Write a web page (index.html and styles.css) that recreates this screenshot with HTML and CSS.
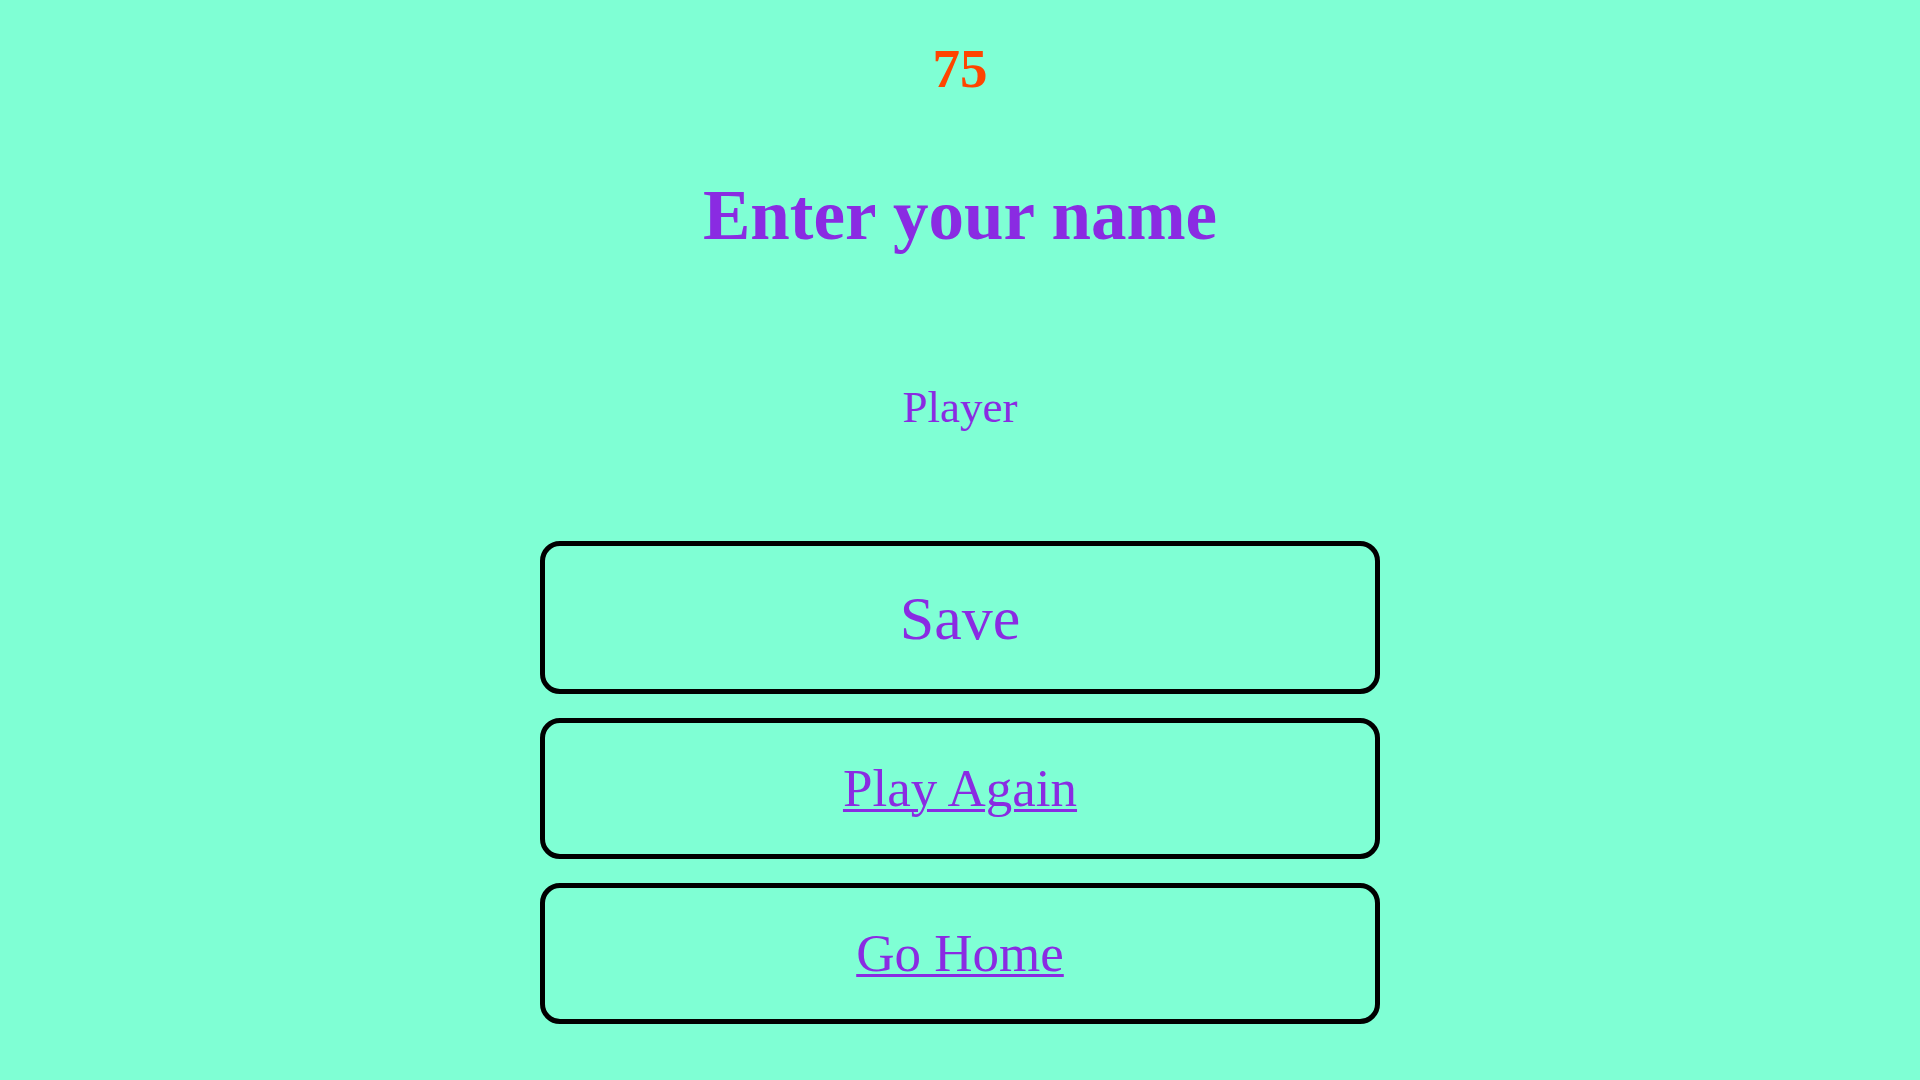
FILE: index.html
```html
<!DOCTYPE html>
<html lang="en">
<head>
<meta charset="utf-8">
<title>Game Over</title>
<link rel="stylesheet" href="styles.css">
</head>
<body>
<main class="screen">
  <div class="score">75</div>
  <h1 class="title">Enter your name</h1>
  <div class="player">Player</div>
  <div class="actions">
    <button class="btn btn-save" type="button">Save</button>
    <div class="btn btn-link-box"><a class="btn-link" href="#">Play Again</a></div>
    <div class="btn btn-link-box"><a class="btn-link" href="#">Go Home</a></div>
  </div>
</main>
</body>
</html>
```

FILE: styles.css
```css
html, body {
  margin: 0;
  padding: 0;
  background: #7fffd4;
}

body {
  font-family: "Liberation Serif", "Times New Roman", serif;
  color: #8a2be2;
  height: 1080px;
  overflow: hidden;
}

.screen {
  display: flex;
  flex-direction: column;
  align-items: center;
  padding-top: 41px;
}

.score {
  font-size: 55px;
  font-weight: bold;
  line-height: 1;
  color: #ff4500;
}

.title {
  margin: 84px 0 0;
  font-size: 71px;
  font-weight: bold;
  line-height: 1;
  color: #8a2be2;
}

.player {
  margin-top: 134px;
  font-size: 45px;
  line-height: 1;
}

.actions {
  margin-top: 111px;
  width: 840px;
  display: flex;
  flex-direction: column;
  gap: 24px;
}

.btn {
  box-sizing: border-box;
  width: 840px;
  border: 5px solid #000;
  border-radius: 20px;
  background: transparent;
  display: flex;
  align-items: center;
  justify-content: center;
  font-family: "Liberation Serif", "Times New Roman", serif;
  color: #8a2be2;
  line-height: 1;
  padding: 0;
}

.btn-save {
  height: 153px;
  font-size: 62px;
}

.btn-link-box {
  height: 141px;
}

.btn-link {
  font-size: 53px;
  line-height: 1;
  color: #8a2be2;
  text-decoration: underline;
  text-decoration-thickness: 3px;
  text-underline-offset: 3px;
}
```
